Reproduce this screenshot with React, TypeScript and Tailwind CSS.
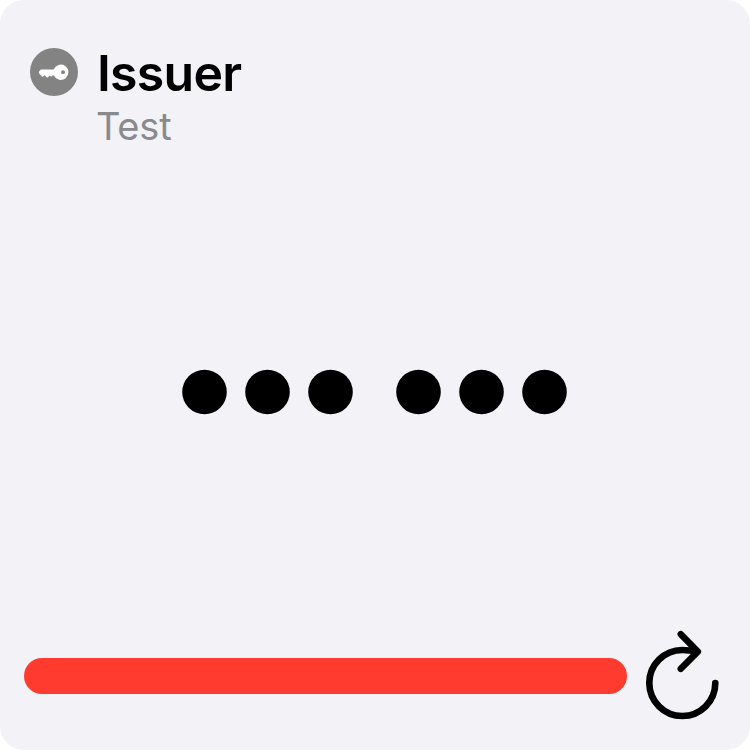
const dotCenters = [22.5, 85.5, 148.5, 236.5, 299.5, 362.5];

function KeyBadge() {
  return (
    <svg className="mt-12 size-12 shrink-0" viewBox="0 0 48 48" aria-hidden="true">
      <circle cx="24" cy="24" r="24" fill="#838383" />
      <path
        fill="#fff"
        fillRule="evenodd"
        d="M10.8 21.6H23.7A7.6 7.6 0 1 1 23.9 27.4H22.7L21.4 28.5L20.6 28.3L19.9 27.4L17.6 29.5L16.8 29.5L14.6 27.2L13 28.7L12.2 28.7L9 25.2C8.7 24.6 8.7 24.1 9.1 23.6ZM33 22.2A1.95 1.95 0 1 0 33 26.1A1.95 1.95 0 1 0 33 22.2Z"
      />
    </svg>
  );
}

function HiddenCode() {
  return (
    <svg className="h-[46px] w-[385px]" viewBox="0 0 385 46" aria-hidden="true">
      {dotCenters.map((x) => (
        <circle key={x} cx={x} cy="23" r="22.3" fill="#000" />
      ))}
    </svg>
  );
}

function RefreshIcon() {
  return (
    <svg
      className="h-[92px] w-20"
      viewBox="642 629 80 92"
      fill="none"
      stroke="#000"
      strokeWidth="6.6"
      strokeLinecap="round"
      strokeLinejoin="round"
      aria-hidden="true"
    >
      <path d="M715.3 683A33 33 0 1 1 682.3 650Q689 650 697 651.6" />
      <path d="M680.8 634.2L697.8 651.6L680.8 668.8" />
    </svg>
  );
}

export default function App() {
  return (
    <div className="h-[750px] w-[750px] overflow-hidden bg-white font-['Inter','Liberation_Sans',sans-serif]">
      <main className="flex h-full flex-col rounded-[24px] bg-[#f2f2f7]">
        <header className="flex h-[200px] pl-[30px]">
          <KeyBadge />
          <div className="ml-[18px] pt-[43px]">
            <h1 className="ml-px text-[50px] leading-[60px] font-semibold tracking-[-0.75px] text-black">Issuer</h1>
            <p className="text-[38px] leading-[47px] tracking-[-0.2px] text-[#8a8a8e]">Test</p>
          </div>
        </header>

        <div className="flex h-[384px] items-center pl-[182px]">
          <HiddenCode />
        </div>

        <footer className="mt-[45px] flex items-start pl-6">
          <div className="mt-[29px] h-9 w-[603px] rounded-full bg-[#ff3b30]" />
          <button type="button" aria-label="Refresh" className="ml-[15px]">
            <RefreshIcon />
          </button>
        </footer>
      </main>
    </div>
  );
}
